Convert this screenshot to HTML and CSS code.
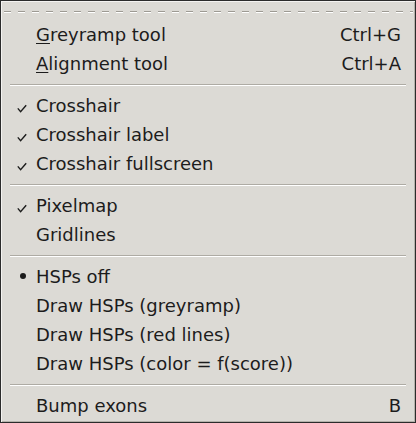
FILE: index.html
```html
<!DOCTYPE html>
<html>
<head>
<meta charset="utf-8">
<link rel="stylesheet" href="styles.css">
</head>
<body>
<div class="menu">
  <div class="tearoff"></div>
  <div class="item"><span class="ind"></span><span class="label"><u>G</u>reyramp tool</span><span class="accel">Ctrl+G</span></div>
  <div class="item"><span class="ind"></span><span class="label"><u>A</u>lignment tool</span><span class="accel">Ctrl+A</span></div>
  <div class="sep"></div>
  <div class="item"><span class="ind"><svg class="check" width="10" height="9" viewBox="0 0 10 9"><path d="M0.8 4.4 L3.6 7.6 L9.2 1.2" fill="none" stroke="#1c1c1c" stroke-width="1.4"/></svg></span><span class="label">Crosshair</span></div>
  <div class="item"><span class="ind"><svg class="check" width="10" height="9" viewBox="0 0 10 9"><path d="M0.8 4.4 L3.6 7.6 L9.2 1.2" fill="none" stroke="#1c1c1c" stroke-width="1.4"/></svg></span><span class="label">Crosshair label</span></div>
  <div class="item"><span class="ind"><svg class="check" width="10" height="9" viewBox="0 0 10 9"><path d="M0.8 4.4 L3.6 7.6 L9.2 1.2" fill="none" stroke="#1c1c1c" stroke-width="1.4"/></svg></span><span class="label">Crosshair fullscreen</span></div>
  <div class="sep"></div>
  <div class="item"><span class="ind"><svg class="check" width="10" height="9" viewBox="0 0 10 9"><path d="M0.8 4.4 L3.6 7.6 L9.2 1.2" fill="none" stroke="#1c1c1c" stroke-width="1.4"/></svg></span><span class="label">Pixelmap</span></div>
  <div class="item"><span class="ind"></span><span class="label">Gridlines</span></div>
  <div class="sep"></div>
  <div class="item"><span class="ind"><span class="dot"></span></span><span class="label">HSPs off</span></div>
  <div class="item"><span class="ind"></span><span class="label">Draw HSPs (greyramp)</span></div>
  <div class="item"><span class="ind"></span><span class="label">Draw HSPs (red lines)</span></div>
  <div class="item"><span class="ind"></span><span class="label">Draw HSPs (color = f(score))</span></div>
  <div class="sep"></div>
  <div class="item"><span class="ind"></span><span class="label">Bump exons</span><span class="accel">B</span></div>
</div>
</body>
</html>
```
FILE: styles.css
```css
html, body {
  margin: 0;
  padding: 0;
  background: #dcdad5;
}
.menu {
  box-sizing: border-box;
  width: 416px;
  height: 423px;
  background: #dcdad5;
  border: 1px solid #2b2b2b;
  box-shadow: inset 1px 1px 0 #f4f3f1, inset -1px -1px 0 #b5b2ab;
  display: flex;
  flex-direction: column;
  font-family: "DejaVu Sans", sans-serif;
  font-size: 18px;
  color: #1c1c1c;
}
.tearoff {
  height: 19px;
  flex: none;
  display: flex;
  flex-direction: column;
  padding: 10px 2px 0 3px;
  box-sizing: border-box;
}
.tearoff::before {
  content: "";
  display: block;
  height: 1px;
  background: repeating-linear-gradient(to right, #9d9a93 0 7px, transparent 7px 14px);
}
.tearoff::after {
  content: "";
  display: block;
  height: 1px;
  background: repeating-linear-gradient(to right, #ffffff 0 7px, transparent 7px 14px);
}
.item {
  height: 29px;
  flex: none;
  display: flex;
  align-items: center;
  padding: 0 14px 0 15px;
  line-height: 21px;
  white-space: nowrap;
}
.ind {
  width: 20px;
  height: 29px;
  flex: none;
}
.check {
  display: block;
  margin: 13px 0 0 1px;
}
.dot {
  display: block;
  width: 6px;
  height: 6px;
  border-radius: 50%;
  background: #1c1c1c;
  margin: 11px 0 0 4px;
}
.label {
  flex: 1;
}
.label u {
  text-decoration-thickness: 1px;
  text-underline-offset: 2px;
}
.accel {
  flex: none;
}
.sep {
  flex: none;
  height: 0;
  margin: 6px 9px 5px 9px;
  border-top: 1px solid #aeaba4;
  border-bottom: 1px solid #ffffff;
}
```
